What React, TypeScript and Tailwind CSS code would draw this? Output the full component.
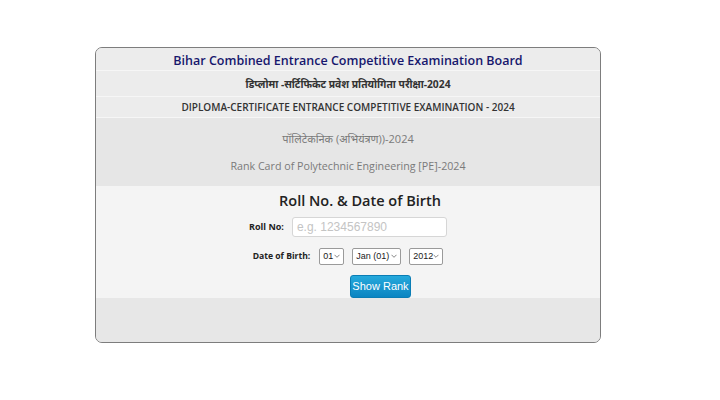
import React from 'react';

const font = { fontFamily: '"Open Sans", "Noto Sans", sans-serif' };

const Select = ({ value, width }: { value: string; width: string }) => (
  <div className={`flex items-center justify-between h-[17px] border border-[#9a9a9a] rounded-[2px] bg-white pl-[3px] pr-[3px] whitespace-nowrap ${width}`}>
    <span className="text-[9px] text-[#222] font-['Liberation_Sans',Arial,sans-serif]">{value}</span>
    <svg width="6" height="4" viewBox="0 0 6 4">
      <path d="M0.5 0.8 L3 3.3 L5.5 0.8" stroke="#666" strokeWidth="0.8" fill="none" />
    </svg>
  </div>
);

const App = () => {
  return (
    <div className="w-[720px] h-[400px] bg-white pt-[47px] pl-[95px]" style={font}>
      <div className="w-[506px] h-[296px] border border-[#7d7d7d] rounded-[7px] bg-[#e9e9e9] overflow-hidden flex flex-col">
        <div className="h-[23px] flex items-center justify-center pt-[5px] border-b border-[#f6f6f6] bg-[#ececec]">
          <h1 className="text-[12.5px] font-semibold text-[#17176d]">Bihar Combined Entrance Competitive Examination Board</h1>
        </div>
        <div className="h-[26px] flex items-center justify-center pt-[3px] border-b border-[#f6f6f6] bg-[#ececec]">
          <p className="text-[10.3px] font-bold text-[#333]">डिप्लोमा -सर्टिफिकेट प्रवेश प्रतियोगिता परीक्षा-2024</p>
        </div>
        <div className="h-[21px] flex items-center justify-center border-b border-[#f6f6f6] bg-[#ececec]">
          <p className="text-[10px] font-semibold text-[#333]">DIPLOMA-CERTIFICATE ENTRANCE COMPETITIVE EXAMINATION - 2024</p>
        </div>
        <div className="h-[68px] flex flex-col items-center justify-center gap-[11px] pt-[1px] bg-[#e6e6e6]">
          <p className="text-[11px] text-[#7a7a7a]">पॉलिटेकनिक (अभियंत्रण))-2024</p>
          <p className="text-[10.7px] text-[#7a7a7a]">Rank Card of Polytechnic Engineering [PE]-2024</p>
        </div>
        <div className="h-[112px] bg-[#f4f4f4] flex flex-col items-center pt-[4px]">
          <h2 className="text-[14.5px] font-semibold text-[#222] ml-[24px]">Roll No. &amp; Date of Birth</h2>
          <div className="flex items-center mt-[5px]">
            <span className="text-[9px] font-bold text-[#222] mr-[8px]">Roll No:</span>
            <div className="w-[155px] h-[20px] border border-[#d6d6d6] rounded-[3px] bg-white flex items-center px-[4px]">
              <span className="text-[12px] text-[#c4c4c4] font-['Liberation_Sans',Arial,sans-serif]">e.g. 1234567890</span>
            </div>
          </div>
          <div className="flex items-center mt-[11px] gap-[8px]">
            <span className="text-[8.6px] font-bold text-[#222] mr-[1px]">Date of Birth:</span>
            <Select value="01" width="w-[25px]" />
            <Select value="Jan (01)" width="w-[49px]" />
            <Select value="2012" width="w-[34px]" />
          </div>
          <button className="mt-[10px] ml-[65px] h-[23px] w-[61px] rounded-[3px] bg-gradient-to-b from-[#25a9dc] to-[#0b85c2] text-white text-[11px] font-['Liberation_Sans',Arial,sans-serif] border border-[#0a7db5]">
            Show Rank
          </button>
        </div>
        <div className="flex-1 bg-[#e7e7e7]" />
      </div>
    </div>
  );
};

export default App;
